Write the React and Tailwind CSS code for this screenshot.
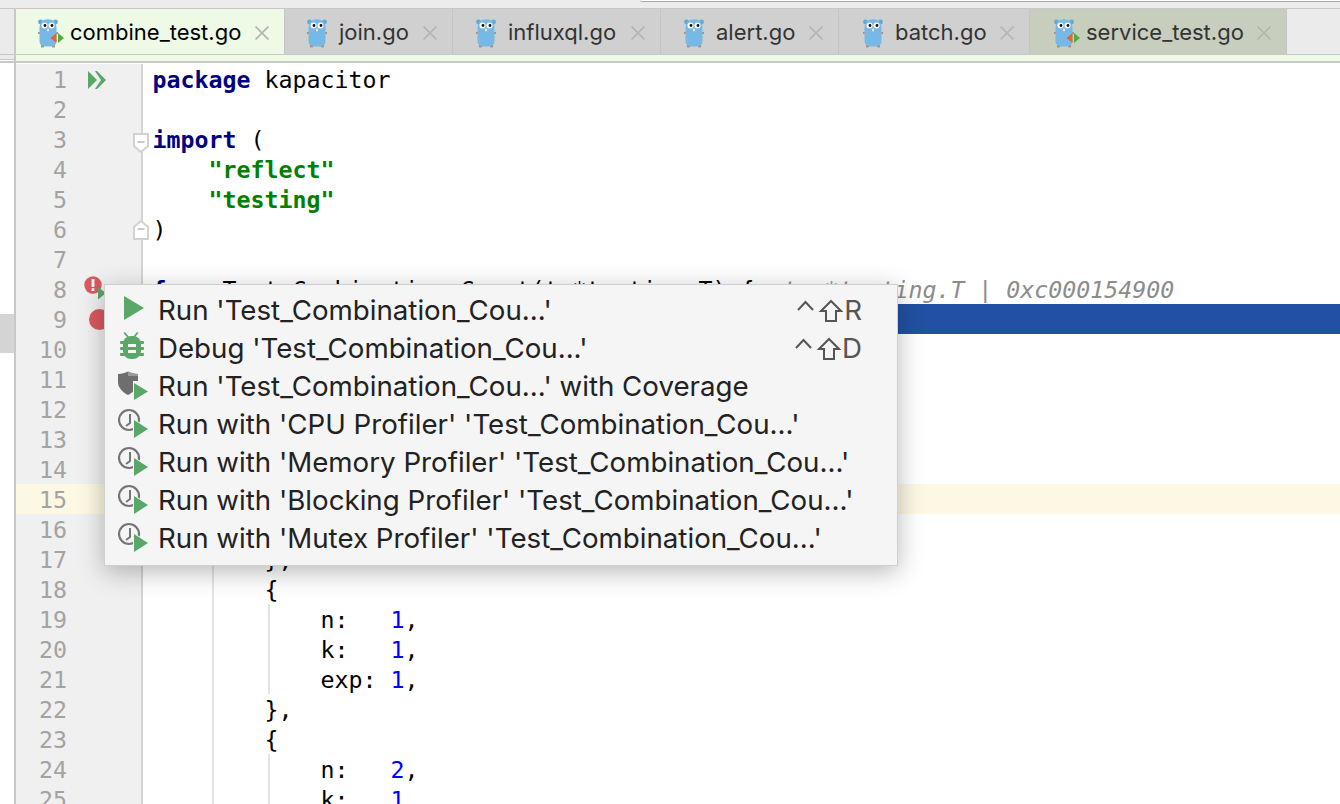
const tabs = [
  { name: "combine_test.go", width: "w-[269px]", pad: "pl-[22px]", bg: "bg-[#eef9e6]", text: "text-[#000000]", test: true },
  { name: "join.go", width: "w-[168px]", pad: "pl-[22px]", bg: "bg-[#d0d0d0]", text: "text-[#333333]" },
  { name: "influxql.go", width: "w-[208px]", pad: "pl-[23px]", bg: "bg-[#d0d0d0]", text: "text-[#333333]" },
  { name: "alert.go", width: "w-[178px]", pad: "pl-[23px]", bg: "bg-[#d0d0d0]", text: "text-[#333333]" },
  { name: "batch.go", width: "w-[191px]", pad: "pl-[24px]", bg: "bg-[#d0d0d0]", text: "text-[#333333]" },
  { name: "service_test.go", width: "w-[257px]", pad: "pl-[24px]", bg: "bg-[#c7cebe]", text: "text-[#333333]", test: true },
];

const kw = "font-bold text-[#000080]";
const str = "font-bold text-[#008000]";
const num = "text-[#0000ff]";

// each line is a list of [text, class] pieces
const lines = [
  [["package", kw], [" kapacitor"]],
  [],
  [["import", kw], [" ("]],
  [['    '], ['"reflect"', str]],
  [['    '], ['"testing"', str]],
  [[")"]],
  [],
  [
    ["func", kw],
    [" Test_Combination_Count(t *testing.T) {  "],
    ["t: *testing.T | 0xc000154900", "italic text-[#8c8c8c]"],
  ],
  [], [], [], [], [], [], [], [],
  [["        },"]],
  [["        {"]],
  [["            n:   "], ["1", num], [","]],
  [["            k:   "], ["1", num], [","]],
  [["            exp: "], ["1", num], [","]],
  [["        },"]],
  [["        {"]],
  [["            n:   "], ["2", num], [","]],
  [["            k:   "], ["1", num], [","]],
];

const menu = [
  { label: "Run 'Test_Combination_Cou...'", icon: "run", keys: "R" },
  { label: "Debug 'Test_Combination_Cou...'", icon: "debug", keys: "D" },
  { label: "Run 'Test_Combination_Cou...' with Coverage", icon: "coverage" },
  { label: "Run with 'CPU Profiler' 'Test_Combination_Cou...'", icon: "profiler" },
  { label: "Run with 'Memory Profiler' 'Test_Combination_Cou...'", icon: "profiler" },
  { label: "Run with 'Blocking Profiler' 'Test_Combination_Cou...'", icon: "profiler" },
  { label: "Run with 'Mutex Profiler' 'Test_Combination_Cou...'", icon: "profiler" },
];

function Gopher({ test }) {
  return (
    <svg width="28" height="30" viewBox="0 0 28 30" className="shrink-0 -ml-[1px]">
      <circle cx="3.5" cy="4" r="2.4" fill="#5fa8d8" />
      <circle cx="18.5" cy="4" r="2.4" fill="#5fa8d8" />
      <rect x="1" y="14" width="3" height="2" fill="#b98a72" />
      <rect x="18" y="14" width="3" height="2" fill="#b98a72" />
      <rect x="4" y="27" width="3" height="2.4" fill="#b98a72" />
      <rect x="15" y="27" width="3" height="2.4" fill="#b98a72" />
      <path d="M2.5 10C2.5 4.5 6 1.2 11 1.2S19.5 4.5 19.5 10V23C19.5 26.5 17 28.4 14 28.4H8C5 28.4 2.5 26.5 2.5 23Z" fill="#76b9e6" />
      <circle cx="7.5" cy="7.5" r="3" fill="#ffffff" />
      <circle cx="14.5" cy="7.5" r="3" fill="#ffffff" />
      <circle cx="8" cy="7.5" r="1.4" fill="#111111" />
      <circle cx="15" cy="7.5" r="1.4" fill="#111111" />
      <ellipse cx="11" cy="10.5" rx="1.6" ry="1" fill="#d8b48e" />
      <rect x="10.2" y="11.2" width="1.6" height="2" fill="#ffffff" />
      {test && (
        <>
          <path d="M13.5 20L19.5 15V25Z" fill="#e8642c" />
          <path d="M21 15V25L27 20Z" fill="#4fae3a" />
        </>
      )}
    </svg>
  );
}

function CloseX() {
  return (
    <svg width="14" height="14" viewBox="0 0 14 14" className="shrink-0 ml-auto">
      <path d="M0.5 0.5L13.5 13.5M13.5 0.5L0.5 13.5" stroke="#b4b8b4" strokeWidth="1.8" />
    </svg>
  );
}

function Tab({ tab }) {
  return (
    <div className={`flex items-center h-full pr-[15px] pt-[3px] border-r border-[#c4c4c4] ${tab.width} ${tab.pad} ${tab.bg}`}>
      <Gopher test={tab.test} />
      <span className={`text-[22px] ml-[5px] -mt-[2px] ${tab.text}`}>{tab.name}</span>
      <CloseX />
    </div>
  );
}

function FoldMark({ up }) {
  return (
    <svg
      width="16"
      height="20"
      viewBox="0 0 16 20"
      className={`absolute z-10 left-[117px] ${up ? "top-[6px] rotate-180" : "top-[9px]"}`}
    >
      <path d="M1 1H15V13L8 19L1 13Z" fill="#ffffff" stroke="#d2d2d2" strokeWidth="2" />
      <path d={up ? "M4.5 11H11.5" : "M4.5 9H11.5"} stroke="#b8b8b8" strokeWidth="1.5" />
    </svg>
  );
}

function RunAll() {
  return (
    <svg width="19" height="18" viewBox="0 0 19 18" className="absolute left-[72px] top-[7px]">
      <path d="M0 0L9 9L0 18Z" fill="#59a869" />
      <path d="M7 0H9L18 9L9 18H7L13 9Z" fill="#59a869" />
    </svg>
  );
}

function ErrorRun() {
  return (
    <svg width="24" height="30" viewBox="0 0 24 30" className="absolute left-[68px] top-0">
      <circle cx="9" cy="11" r="8.7" fill="#db5860" />
      <rect x="7.6" y="5" width="2.8" height="8" fill="#ffffff" />
      <rect x="7.6" y="14.2" width="2.8" height="2.8" fill="#ffffff" />
      <path d="M14 13L22 19L14 25.5Z" fill="#59a869" />
    </svg>
  );
}

function Breakpoint() {
  return <div className="absolute left-[73px] top-[5px] w-[21px] h-[21px] rounded-full bg-[#db5860]" />;
}

function CodeLine({ n, parts }) {
  const highlight = n === 15;
  const selected = n === 9;
  const gutterBg = highlight ? "bg-[#fdf8e3]" : "bg-[#f0f0f0]";
  const codeBg = highlight ? "bg-[#fdf8e3]" : selected ? "bg-[#2251a3]" : "bg-white";
  return (
    <div className="flex h-[30px]">
      <div className={`relative w-[127px] shrink-0 border-r-2 border-[#d4d4d4] ${gutterBg}`}>
        <div className="w-[51px] text-right leading-[32px] text-[#a3a3a3]">{n}</div>
        {n === 1 && <RunAll />}
        {n === 3 && <FoldMark />}
        {n === 6 && <FoldMark up />}
        {n === 8 && <ErrorRun />}
        {n === 9 && <Breakpoint />}
      </div>
      <div className={`relative flex-1 pl-[9.5px] leading-[32px] whitespace-pre text-[#000000] ${codeBg}`}>
        {n >= 10 && <div className="absolute left-[69px] top-0 h-full w-[2px] bg-[#e4e4e4]" />}
        {[19, 20, 21, 24, 25].includes(n) && <div className="absolute left-[125px] top-0 h-full w-[2px] bg-[#e4e4e4]" />}
        {parts.map((p, i) => (
          <span key={i} className={p[1]}>{p[0]}</span>
        ))}
      </div>
    </div>
  );
}

function MenuIcon({ type }) {
  return (
    <svg width="40" height="38" viewBox="0 0 40 38" className="shrink-0">
      {type === "run" && <path d="M6 5V29L26 17Z" fill="#59a869" />}
      {type === "debug" && (
        <g fill="#59a869">
          <path d="M7 3L11 8H9L5.5 4ZM19 3L15 8H17L20.5 4Z" />
          <rect x="5" y="7" width="18" height="23" rx="8" />
          <rect x="2" y="12" width="24" height="3" rx="1" />
          <rect x="2" y="18" width="24" height="3" rx="1" />
          <rect x="2" y="24" width="24" height="3" rx="1" />
          <rect x="10" y="15" width="8" height="3" fill="#f5f5f5" />
          <rect x="10" y="21" width="8" height="3" fill="#f5f5f5" />
        </g>
      )}
      {type === "coverage" && (
        <g>
          <path d="M0 7C4 7 7 6 10 4.5C13 6 16 7 20 7V15C20 21 15 25.5 10 28C5 25.5 0 21 0 15Z" fill="#6e6e6e" />
          <path d="M10 4.5C13 6 16 7 20 7V9H10Z" fill="#9a9a9a" />
          <path d="M15 14H22V28H15Z" fill="#f5f5f5" />
          <path d="M16 16V33L30 24.5Z" fill="#59a869" />
        </g>
      )}
      {type === "profiler" && (
        <g>
          <circle cx="11" cy="15" r="10" fill="none" stroke="#757575" strokeWidth="2.2" />
          <path d="M12 9V18L8 21" fill="none" stroke="#757575" strokeWidth="2" />
          <path d="M16 15V33L30 24Z" fill="#59a869" stroke="#f5f5f5" strokeWidth="2" paintOrder="stroke" />
        </g>
      )}
    </svg>
  );
}

function ShiftKeys() {
  return (
    <svg width="46" height="24" viewBox="0 0 46 24" className="shrink-0 mr-[1px]">
      <path d="M1 11L8.5 3L16 11" fill="none" stroke="#555555" strokeWidth="2" />
      <path d="M34 2L44 12H39V22H29V12H24Z" fill="none" stroke="#555555" strokeWidth="2" />
    </svg>
  );
}

export default function App() {
  return (
    <div className="relative h-[804px] overflow-hidden bg-white font-['DejaVu_Sans_Mono',monospace] text-[23.25px]">
      {/* top strip */}
      <div className="h-[8px] bg-[#ececec]">
        <div className="ml-[640px] h-[2px] bg-white border-b border-[#a8a8a8] rounded-bl-[3px]" />
      </div>

      {/* tab bar */}
      <div className="flex h-[47px] border-y border-[#c8c8c8] bg-[#ebebeb] font-['Inter',sans-serif]">
        <div className="w-[16px] shrink-0 border-r-2 border-[#c8c8c8]" />
        {tabs.map((tab) => (
          <Tab key={tab.name} tab={tab} />
        ))}
      </div>
      <div className="flex h-[8px] border-b-2 border-[#c8c8c8]">
        <div className="w-[14px] shrink-0">
          <div className="h-[5px] bg-[#ebebeb] border-b border-[#c8c8c8]" />
        </div>
        <div className="flex-1 bg-[#eef9e6] border-l-2 border-[#c8c8c8]" />
      </div>

      {/* editor */}
      <div className="flex">
        <div className="w-[14px] shrink-0 pt-[251px]">
          <div className="h-[39px] bg-[#d4d4d4]" />
        </div>
        <div className="flex-1 border-l-2 border-[#c8c8c8] pt-[1px]">
          {lines.map((parts, i) => (
            <CodeLine key={i} n={i + 1} parts={parts} />
          ))}
        </div>
      </div>

      {/* run popup */}
      <div className="absolute left-[104px] top-[284px] w-[794px] h-[282px] pt-[6px] pl-[13px] pr-[35px] bg-[#f5f5f5] border border-[#cfcfcf] shadow-[0_6px_24px_rgba(0,0,0,0.28)] font-['Inter',sans-serif] text-[27.7px] text-[#222222]">
        {menu.map((item) => (
          <div key={item.label} className="flex items-center h-[38px]">
            <MenuIcon type={item.icon} />
            <span className="pt-[2px]">{item.label}</span>
            {item.keys && (
              <span className="flex items-center ml-auto pt-[2px] text-[#555555]">
                <ShiftKeys />
                {item.keys}
              </span>
            )}
          </div>
        ))}
      </div>
    </div>
  );
}
